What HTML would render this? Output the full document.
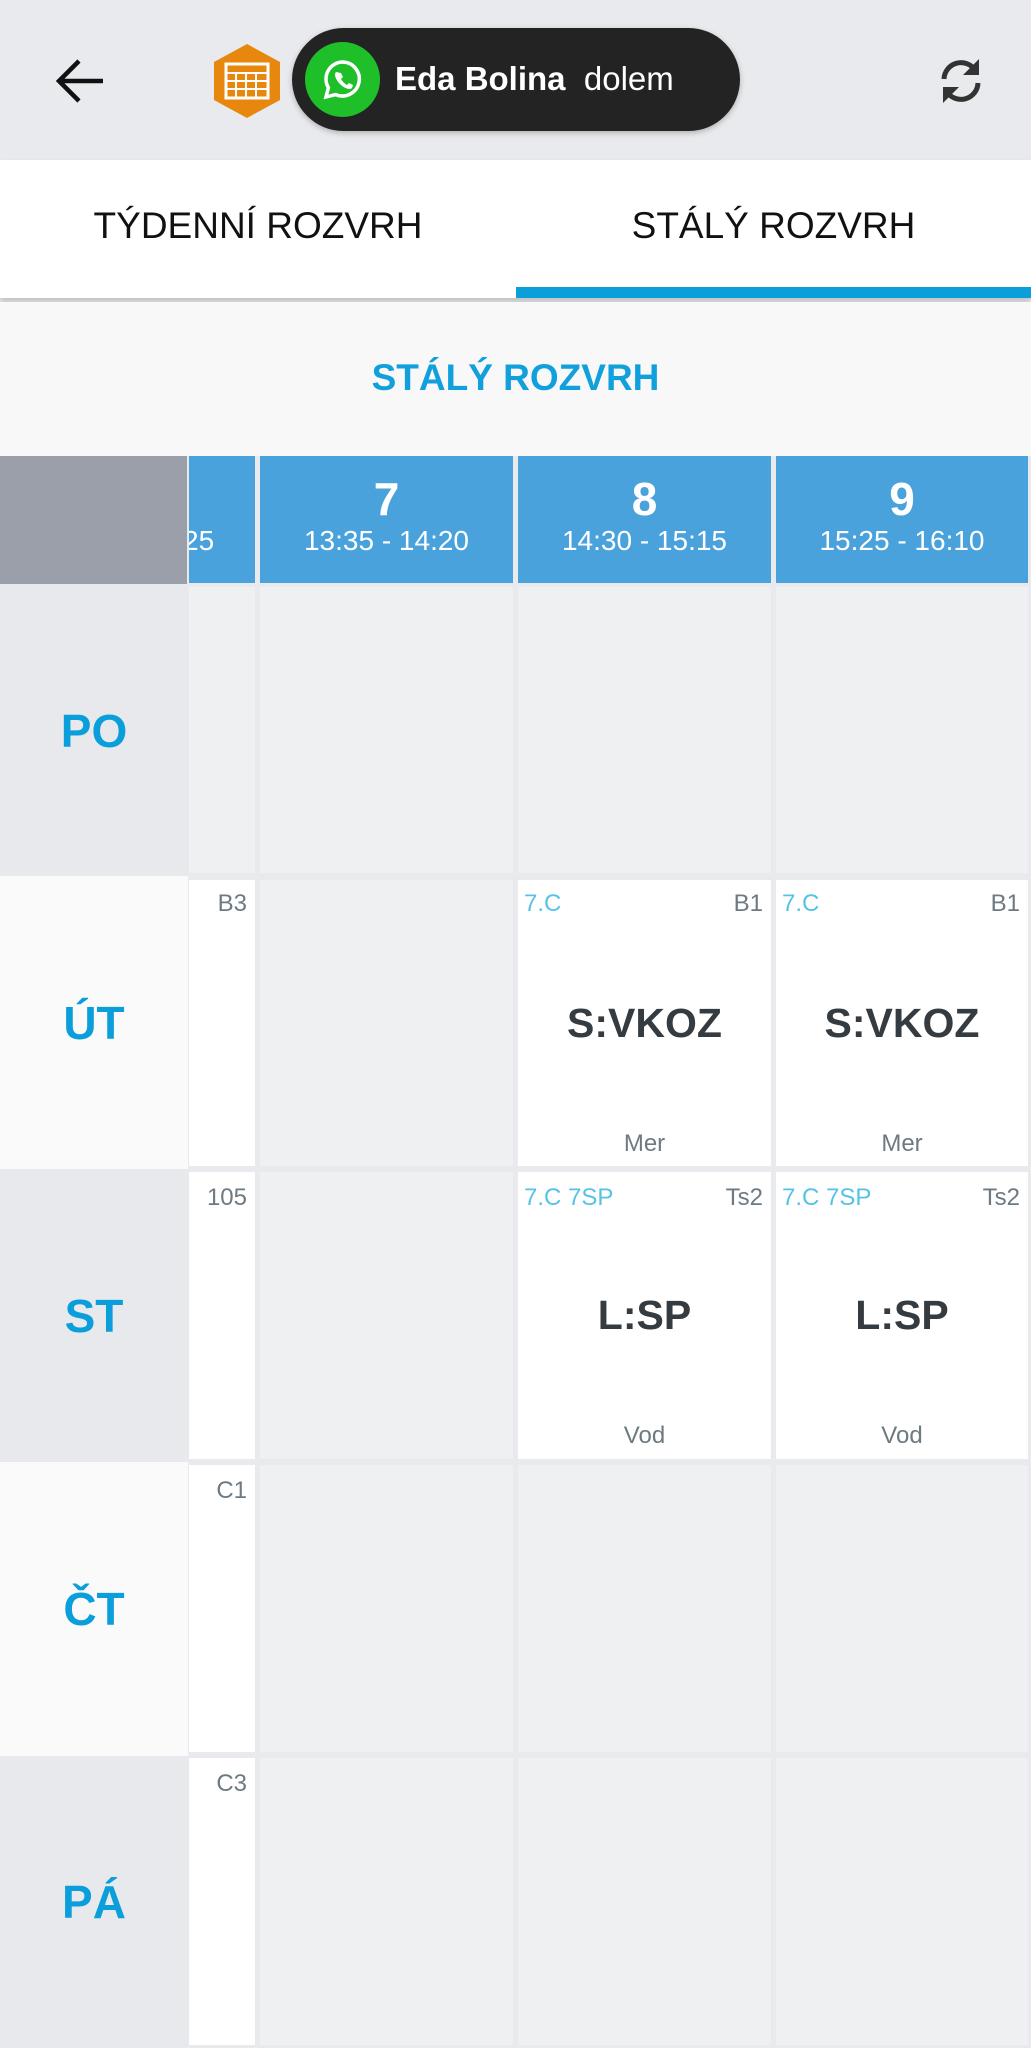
<!DOCTYPE html>
<html><head><meta charset="utf-8"><style>
*{margin:0;padding:0;box-sizing:border-box}
body{width:1031px;height:2048px;background:#e9eaed;font-family:"Liberation Sans",Arial,sans-serif;position:relative;overflow:hidden}
.a{position:absolute}
.day{position:absolute;left:0;width:188px;display:flex;align-items:center;justify-content:center;color:#0a9edb;font-weight:bold;font-size:46px}
.c{position:absolute;background:#eff0f2}
.w{background:#fff}
.sm{position:absolute;font-size:24px;color:#6d7a82}
.bl{color:#56c3e6}
.subj{position:absolute;left:0;right:0;text-align:center;font-weight:bold;font-size:41px;color:#343b41}
.hd{position:absolute;top:456px;height:127px;background:#4aa2dc;color:#fff;text-align:center}
.hd b{display:block;font-size:46px;margin-top:18px;line-height:50px}
.hd span{display:block;font-size:28px;line-height:34px}
</style></head><body>
<div class="a" style="left:0;top:0;width:1031px;height:160px;background:#e9eaed"></div>
<svg class="a" style="left:55px;top:58px" width="50" height="46" viewBox="0 0 50 46"><path d="M48 23H5M24 3L4 23l20 20" fill="none" stroke="#111" stroke-width="4.5"/></svg>
<svg class="a" style="left:212px;top:42px" width="70" height="78" viewBox="0 0 70 78"><polygon points="35,2 68,20 68,58 35,76 2,58 2,20" fill="#e8870d"/><rect x="14" y="22" width="42" height="34" fill="none" stroke="#fff" stroke-width="3"/><path d="M14 31h42M14 39h42M14 47h42M24 31v25M34 31v25M44 31v25" stroke="#fff" stroke-width="2"/></svg>
<div class="a" style="left:292px;top:28px;width:448px;height:103px;border-radius:52px;background:#232323;box-shadow:0 2px 6px rgba(0,0,0,.25)"></div>
<div class="a" style="left:305px;top:42px;width:75px;height:75px;border-radius:50%;background:#1fbf2a"></div>
<svg class="a" style="left:321px;top:58px" width="44" height="44" viewBox="0 0 44 44"><path d="M22 4a17 17 0 0 0-14.6 25.7L5 39l9.6-2.4A17 17 0 1 0 22 4z" fill="none" stroke="#fff" stroke-width="3.5"/><path d="M15 14c-2 2-1 7 4 12s10 6 12 4l1-3-4-2-2 2c-2-1-5-4-6-6l2-2-2-4z" fill="#fff"/></svg>
<div class="a" style="left:395px;top:60px;font-size:33px;color:#fff;white-space:nowrap"><b>Eda Bolina</b>&nbsp; dolem</div>
<svg class="a" style="left:935px;top:55px" width="52" height="52" viewBox="0 0 52 52"><path d="M9 24A17 17 0 0 1 40 15M43 28A17 17 0 0 1 12 37" fill="none" stroke="#333" stroke-width="5"/><path d="M44 4v16H28z M8 48V32h16z" fill="#333"/></svg>
<div class="a" style="left:0;top:160px;width:1031px;height:138px;background:#fff;box-shadow:0 4px 6px rgba(0,0,0,.18)"></div>
<div class="a" style="left:0;top:205px;width:516px;text-align:center;font-size:37px;color:#111">TÝDENNÍ ROZVRH</div>
<div class="a" style="left:516px;top:205px;width:515px;text-align:center;font-size:37px;color:#111">STÁLÝ ROZVRH</div>
<div class="a" style="left:516px;top:287px;width:515px;height:11px;background:#0a9edb"></div>
<div class="a" style="left:0;top:302px;width:1031px;height:154px;background:#f8f8f9"></div>
<div class="a" style="left:0;top:357px;width:1031px;text-align:center;font-size:37px;font-weight:bold;color:#12a0dc">STÁLÝ ROZVRH</div>
<div class="a" style="left:0;top:456px;width:187px;height:128px;background:#9b9fa9"></div>
<div class="hd" style="left:189px;width:66px;overflow:hidden"><span style="margin-top:68px;text-align:left;margin-left:-6px">25</span></div>
<div class="hd" style="left:260px;width:253px"><b>7</b><span>13:35 - 14:20</span></div>
<div class="hd" style="left:518px;width:253px"><b>8</b><span>14:30 - 15:15</span></div>
<div class="hd" style="left:776px;width:252px"><b>9</b><span>15:25 - 16:10</span></div>

<div class="day" style="top:585px;height:291px;background:#e8e9ec">PO</div>
<div class="day" style="top:876px;height:293px;background:#fafafa">ÚT</div>
<div class="day" style="top:1169px;height:293px;background:#e8e9ec">ST</div>
<div class="day" style="top:1462px;height:294px;background:#fafafa">ČT</div>
<div class="day" style="top:1756px;height:292px;background:#e8e9ec">PÁ</div>

<!-- PO -->
<div class="c" style="left:189px;top:587px;width:66px;height:286px"></div>
<div class="c" style="left:260px;top:587px;width:253px;height:286px"></div>
<div class="c" style="left:518px;top:587px;width:253px;height:286px"></div>
<div class="c" style="left:776px;top:587px;width:252px;height:286px"></div>
<!-- UT -->
<div class="c w" style="left:189px;top:880px;width:66px;height:286px"><div class="sm" style="right:8px;top:10px">B3</div></div>
<div class="c" style="left:260px;top:880px;width:253px;height:286px"></div>
<div class="c w" style="left:518px;top:880px;width:253px;height:286px"><div class="sm bl" style="left:6px;top:10px">7.C</div><div class="sm" style="right:8px;top:10px">B1</div><div class="subj" style="top:120px">S:VKOZ</div><div class="sm" style="left:0;right:0;text-align:center;top:250px">Mer</div></div>
<div class="c w" style="left:776px;top:880px;width:252px;height:286px"><div class="sm bl" style="left:6px;top:10px">7.C</div><div class="sm" style="right:8px;top:10px">B1</div><div class="subj" style="top:120px">S:VKOZ</div><div class="sm" style="left:0;right:0;text-align:center;top:250px">Mer</div></div>
<!-- ST -->
<div class="c w" style="left:189px;top:1172px;width:66px;height:287px"><div class="sm" style="right:8px;top:12px">105</div></div>
<div class="c" style="left:260px;top:1172px;width:253px;height:287px"></div>
<div class="c w" style="left:518px;top:1172px;width:253px;height:287px"><div class="sm bl" style="left:6px;top:12px">7.C 7SP</div><div class="sm" style="right:8px;top:12px">Ts2</div><div class="subj" style="top:120px">L:SP</div><div class="sm" style="left:0;right:0;text-align:center;top:250px">Vod</div></div>
<div class="c w" style="left:776px;top:1172px;width:252px;height:287px"><div class="sm bl" style="left:6px;top:12px">7.C 7SP</div><div class="sm" style="right:8px;top:12px">Ts2</div><div class="subj" style="top:120px">L:SP</div><div class="sm" style="left:0;right:0;text-align:center;top:250px">Vod</div></div>
<!-- CT -->
<div class="c w" style="left:189px;top:1465px;width:66px;height:287px"><div class="sm" style="right:8px;top:12px">C1</div></div>
<div class="c" style="left:260px;top:1465px;width:253px;height:287px"></div>
<div class="c" style="left:518px;top:1465px;width:253px;height:287px"></div>
<div class="c" style="left:776px;top:1465px;width:252px;height:287px"></div>
<!-- PA -->
<div class="c w" style="left:189px;top:1758px;width:66px;height:287px"><div class="sm" style="right:8px;top:12px">C3</div></div>
<div class="c" style="left:260px;top:1758px;width:253px;height:287px"></div>
<div class="c" style="left:518px;top:1758px;width:253px;height:287px"></div>
<div class="c" style="left:776px;top:1758px;width:252px;height:287px"></div>
</body></html>
